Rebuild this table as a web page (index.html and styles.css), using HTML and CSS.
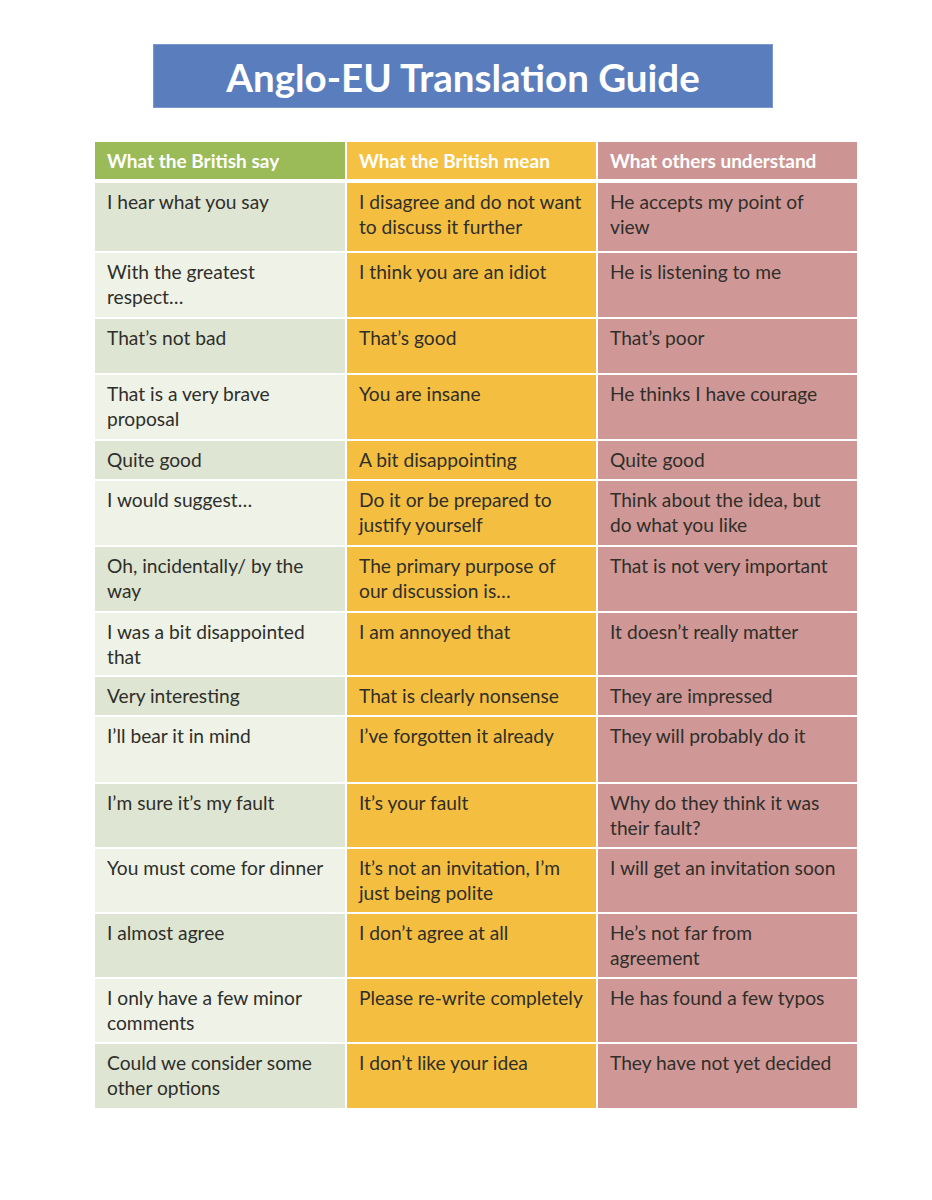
FILE: index.html
```html
<!DOCTYPE html>
<html lang="en">
<head>
<meta charset="utf-8">
<title>Anglo-EU Translation Guide</title>
<link rel="stylesheet" href="styles.css">
</head>
<body>
<div class="page">
  <h1 class="title">Anglo-EU Translation Guide</h1>
  <div class="table">
    <div class="head">
      <div class="hcell c1">What the British say</div>
      <div class="hcell c2">What the British mean</div>
      <div class="hcell c3">What others understand</div>
    </div>
    <div class="body">
      <div class="cell c1 dark">I hear what you say</div>
      <div class="cell c2">I disagree and do not want to discuss it further</div>
      <div class="cell c3">He accepts my point of view</div>

      <div class="cell c1 light">With the greatest respect…</div>
      <div class="cell c2">I think you are an idiot</div>
      <div class="cell c3">He is listening to me</div>

      <div class="cell c1 dark">That’s not bad</div>
      <div class="cell c2">That’s good</div>
      <div class="cell c3">That’s poor</div>

      <div class="cell c1 light">That is a very brave proposal</div>
      <div class="cell c2">You are insane</div>
      <div class="cell c3">He thinks I have courage</div>

      <div class="cell c1 dark">Quite good</div>
      <div class="cell c2">A bit disappointing</div>
      <div class="cell c3">Quite good</div>

      <div class="cell c1 light">I would suggest…</div>
      <div class="cell c2">Do it or be prepared to justify yourself</div>
      <div class="cell c3">Think about the idea, but do what you like</div>

      <div class="cell c1 dark">Oh, incidentally/ by the way</div>
      <div class="cell c2">The primary purpose of our discussion is…</div>
      <div class="cell c3">That is not very important</div>

      <div class="cell c1 light">I was a bit disappointed that</div>
      <div class="cell c2">I am annoyed that</div>
      <div class="cell c3">It doesn’t really matter</div>

      <div class="cell c1 dark">Very interesting</div>
      <div class="cell c2">That is clearly nonsense</div>
      <div class="cell c3">They are impressed</div>

      <div class="cell c1 light">I’ll bear it in mind</div>
      <div class="cell c2">I’ve forgotten it already</div>
      <div class="cell c3">They will probably do it</div>

      <div class="cell c1 dark">I’m sure it’s my fault</div>
      <div class="cell c2">It’s your fault</div>
      <div class="cell c3">Why do they think it was their fault?</div>

      <div class="cell c1 light">You must come for dinner</div>
      <div class="cell c2">It’s not an invitation, I’m just being polite</div>
      <div class="cell c3">I will get an invitation soon</div>

      <div class="cell c1 dark">I almost agree</div>
      <div class="cell c2">I don’t agree at all</div>
      <div class="cell c3">He’s not far from agreement</div>

      <div class="cell c1 light">I only have a few minor comments</div>
      <div class="cell c2">Please re-write completely</div>
      <div class="cell c3">He has found a few typos</div>

      <div class="cell c1 dark">Could we consider some other options</div>
      <div class="cell c2">I don’t like your idea</div>
      <div class="cell c3">They have not yet decided</div>
    </div>
  </div>
</div>
</body>
</html>
```
FILE: styles.css
```css
html, body {
  margin: 0;
  padding: 0;
  background: #ffffff;
}

body {
  font-family: Lato, "Open Sans", "Noto Sans", sans-serif;
  color: #2f2e2a;
}

.page {
  width: 932px;
  padding-top: 44px;
  display: flex;
  flex-direction: column;
  align-items: flex-start;
}

.title {
  margin: 0 0 0 153px;
  width: 620px;
  height: 64px;
  box-sizing: border-box;
  background: #5a7ebd;
  border: 1px solid #7d98cc;
  color: #ffffff;
  font-size: 38.5px;
  font-weight: 700;
  display: flex;
  align-items: center;
  justify-content: center;
  padding-top: 2px;
}

.table {
  margin: 34px 0 0 95px;
}

.head,
.body {
  display: grid;
  grid-template-columns: 250px 249px 259px;
  column-gap: 2px;
}

.head {
  height: 37px;
}

.body {
  margin-top: 4px;
  row-gap: 2px;
  grid-template-rows: 68px 64px 54px 64px 38px 64px 64px 62px 38px 65px 63px 63px 63px 63px 64px;
}

.hcell {
  color: #ffffff;
  font-size: 19px;
  font-weight: 700;
  padding: 0 12px;
  display: flex;
  align-items: center;
}

.hcell.c1 { background: #9bbb59; }
.hcell.c2 { background: #f5c143; }
.hcell.c3 { background: #cc9593; }

.cell {
  font-size: 19.2px;
  line-height: 25px;
  padding: 6px 10px 0 12px;
  box-sizing: border-box;
}

.cell.c3 { padding-right: 14px; }

.cell.dark { background: #dee5d3; }
.cell.light { background: #eef2e7; }
.cell.c2 { background: #f4bf40; }
.cell.c3 { background: #cf9896; }
```
